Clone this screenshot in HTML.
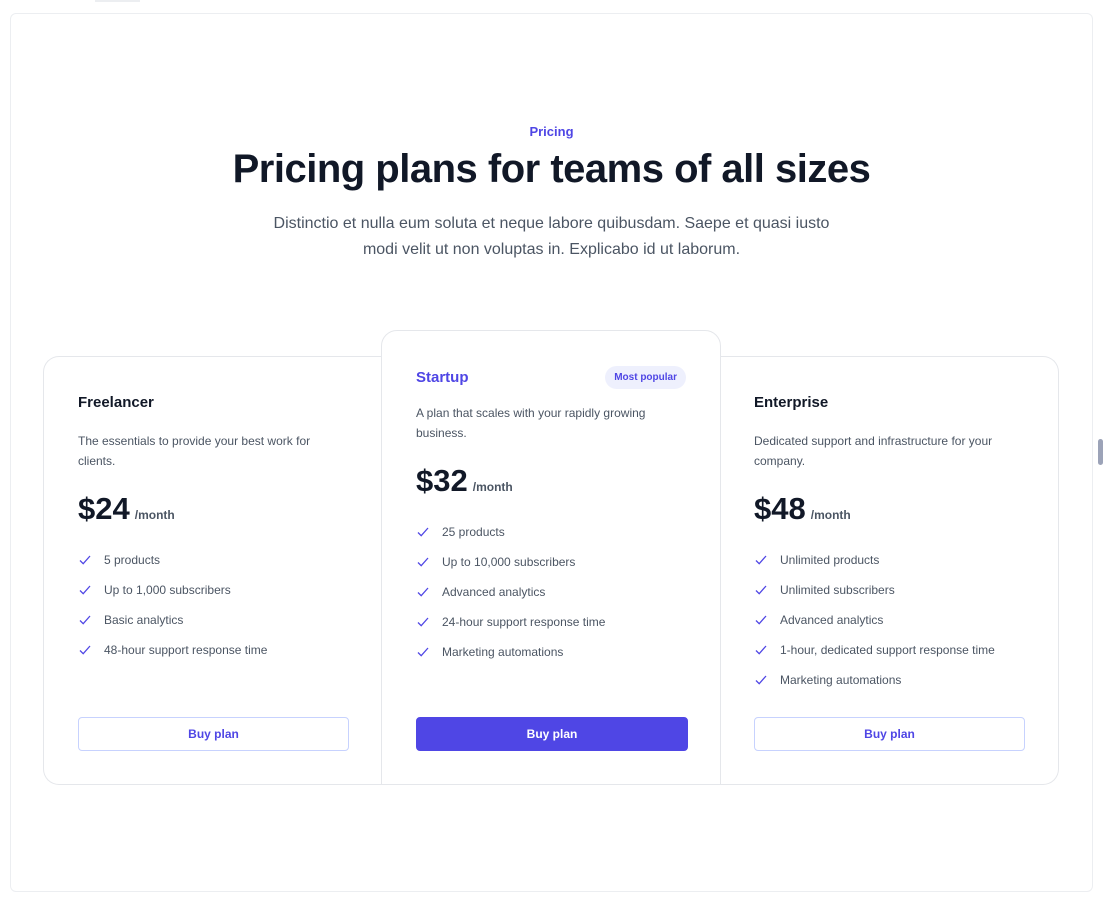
<!DOCTYPE html>
<html><head><meta charset="utf-8"><style>
*{box-sizing:border-box;margin:0;padding:0}
body{width:1108px;height:902px;background:#fff;font-family:"Liberation Sans",sans-serif;position:relative;overflow:hidden;color:#111827}
.frame{position:absolute;left:10px;top:13px;width:1083px;height:879px;border:1px solid #eceef1;border-radius:6px}
.tab{position:absolute;left:95px;top:0;width:45px;height:2px;background:#eceef1}
.thumb{position:absolute;left:1098px;top:439px;width:5px;height:26px;border-radius:3px;background:#9ca3b8}
.eyebrow{position:absolute;top:124px;left:0;width:1103px;text-align:center;color:#4f46e5;font-size:13px;font-weight:bold}
h1{position:absolute;top:147px;left:0;width:1103px;text-align:center;font-size:40px;letter-spacing:-0.5px;font-weight:bold;color:#111827}
.sub{position:absolute;top:211px;left:0;width:1103px;text-align:center;font-size:16px;line-height:26px;color:#4b5563}
.card{position:absolute;border:1px solid #e5e7eb;background:#fff;padding:0 34px}
.c1{left:43px;top:356px;width:340px;height:429px;border-radius:16px 0 0 16px;border-right:none}
.c2{left:381px;top:330px;width:340px;height:455px;border-radius:16px 16px 0 0;z-index:2}
.c3{left:720px;top:356px;width:339px;height:429px;border-radius:0 16px 16px 0;border-left:none}
.t{font-size:15px;font-weight:bold;margin-top:37px;height:20px}
.c2 .t{color:#4f46e5;margin-top:36px;display:flex;justify-content:space-between;align-items:center}
.badge{font-size:10px;background:#eef0fd;color:#4f46e5;border-radius:12px;padding:6px 9px}
.d{font-size:12px;line-height:20px;color:#4b5563;margin-top:17px;height:40px}
.c2 .d{margin-top:16px}
.p{margin-top:20px;font-size:31px;font-weight:bold;height:40px}
.p span{font-size:12px;color:#4b5563;font-weight:bold;margin-left:5px}
ul{list-style:none;margin-top:14px}
li{font-size:12px;color:#4b5563;height:30px;line-height:30px;display:flex;align-items:center}
li svg{margin-right:12px}
.b{position:absolute;left:34px;top:360px;width:271px;height:34px;border:1px solid #c7d2fe;border-radius:4px;color:#4f46e5;font-size:12px;font-weight:bold;text-align:center;line-height:32px}
.c2 .b{top:386px;background:#4f46e5;color:#fff;border-color:#4f46e5;width:272px}
</style></head><body>
<div class="tab"></div>
<div class="frame"></div>
<div class="thumb"></div>
<div class="eyebrow">Pricing</div>
<h1>Pricing plans for teams of all sizes</h1>
<div class="sub">Distinctio et nulla eum soluta et neque labore quibusdam. Saepe et quasi iusto<br>modi velit ut non voluptas in. Explicabo id ut laborum.</div>

<div class="card c1"><div class="t">Freelancer</div><div class="d">The essentials to provide your best work for clients.</div><div class="p">$24<span>/month</span></div>
<ul>
<li><svg width="14" height="14" viewBox="0 0 14 14"><path d="M2 7.5l3.2 3.2L12 3" fill="none" stroke="#4f46e5" stroke-width="1.3"/></svg>5 products</li>
<li><svg width="14" height="14" viewBox="0 0 14 14"><path d="M2 7.5l3.2 3.2L12 3" fill="none" stroke="#4f46e5" stroke-width="1.3"/></svg>Up to 1,000 subscribers</li>
<li><svg width="14" height="14" viewBox="0 0 14 14"><path d="M2 7.5l3.2 3.2L12 3" fill="none" stroke="#4f46e5" stroke-width="1.3"/></svg>Basic analytics</li>
<li><svg width="14" height="14" viewBox="0 0 14 14"><path d="M2 7.5l3.2 3.2L12 3" fill="none" stroke="#4f46e5" stroke-width="1.3"/></svg>48-hour support response time</li>
</ul><div class="b">Buy plan</div></div>

<div class="card c2"><div class="t">Startup<span class="badge">Most popular</span></div><div class="d">A plan that scales with your rapidly growing business.</div><div class="p">$32<span>/month</span></div>
<ul>
<li><svg width="14" height="14" viewBox="0 0 14 14"><path d="M2 7.5l3.2 3.2L12 3" fill="none" stroke="#4f46e5" stroke-width="1.3"/></svg>25 products</li>
<li><svg width="14" height="14" viewBox="0 0 14 14"><path d="M2 7.5l3.2 3.2L12 3" fill="none" stroke="#4f46e5" stroke-width="1.3"/></svg>Up to 10,000 subscribers</li>
<li><svg width="14" height="14" viewBox="0 0 14 14"><path d="M2 7.5l3.2 3.2L12 3" fill="none" stroke="#4f46e5" stroke-width="1.3"/></svg>Advanced analytics</li>
<li><svg width="14" height="14" viewBox="0 0 14 14"><path d="M2 7.5l3.2 3.2L12 3" fill="none" stroke="#4f46e5" stroke-width="1.3"/></svg>24-hour support response time</li>
<li><svg width="14" height="14" viewBox="0 0 14 14"><path d="M2 7.5l3.2 3.2L12 3" fill="none" stroke="#4f46e5" stroke-width="1.3"/></svg>Marketing automations</li>
</ul><div class="b">Buy plan</div></div>

<div class="card c3"><div class="t">Enterprise</div><div class="d">Dedicated support and infrastructure for your company.</div><div class="p">$48<span>/month</span></div>
<ul>
<li><svg width="14" height="14" viewBox="0 0 14 14"><path d="M2 7.5l3.2 3.2L12 3" fill="none" stroke="#4f46e5" stroke-width="1.3"/></svg>Unlimited products</li>
<li><svg width="14" height="14" viewBox="0 0 14 14"><path d="M2 7.5l3.2 3.2L12 3" fill="none" stroke="#4f46e5" stroke-width="1.3"/></svg>Unlimited subscribers</li>
<li><svg width="14" height="14" viewBox="0 0 14 14"><path d="M2 7.5l3.2 3.2L12 3" fill="none" stroke="#4f46e5" stroke-width="1.3"/></svg>Advanced analytics</li>
<li><svg width="14" height="14" viewBox="0 0 14 14"><path d="M2 7.5l3.2 3.2L12 3" fill="none" stroke="#4f46e5" stroke-width="1.3"/></svg>1-hour, dedicated support response time</li>
<li><svg width="14" height="14" viewBox="0 0 14 14"><path d="M2 7.5l3.2 3.2L12 3" fill="none" stroke="#4f46e5" stroke-width="1.3"/></svg>Marketing automations</li>
</ul><div class="b">Buy plan</div></div>
</body></html>
